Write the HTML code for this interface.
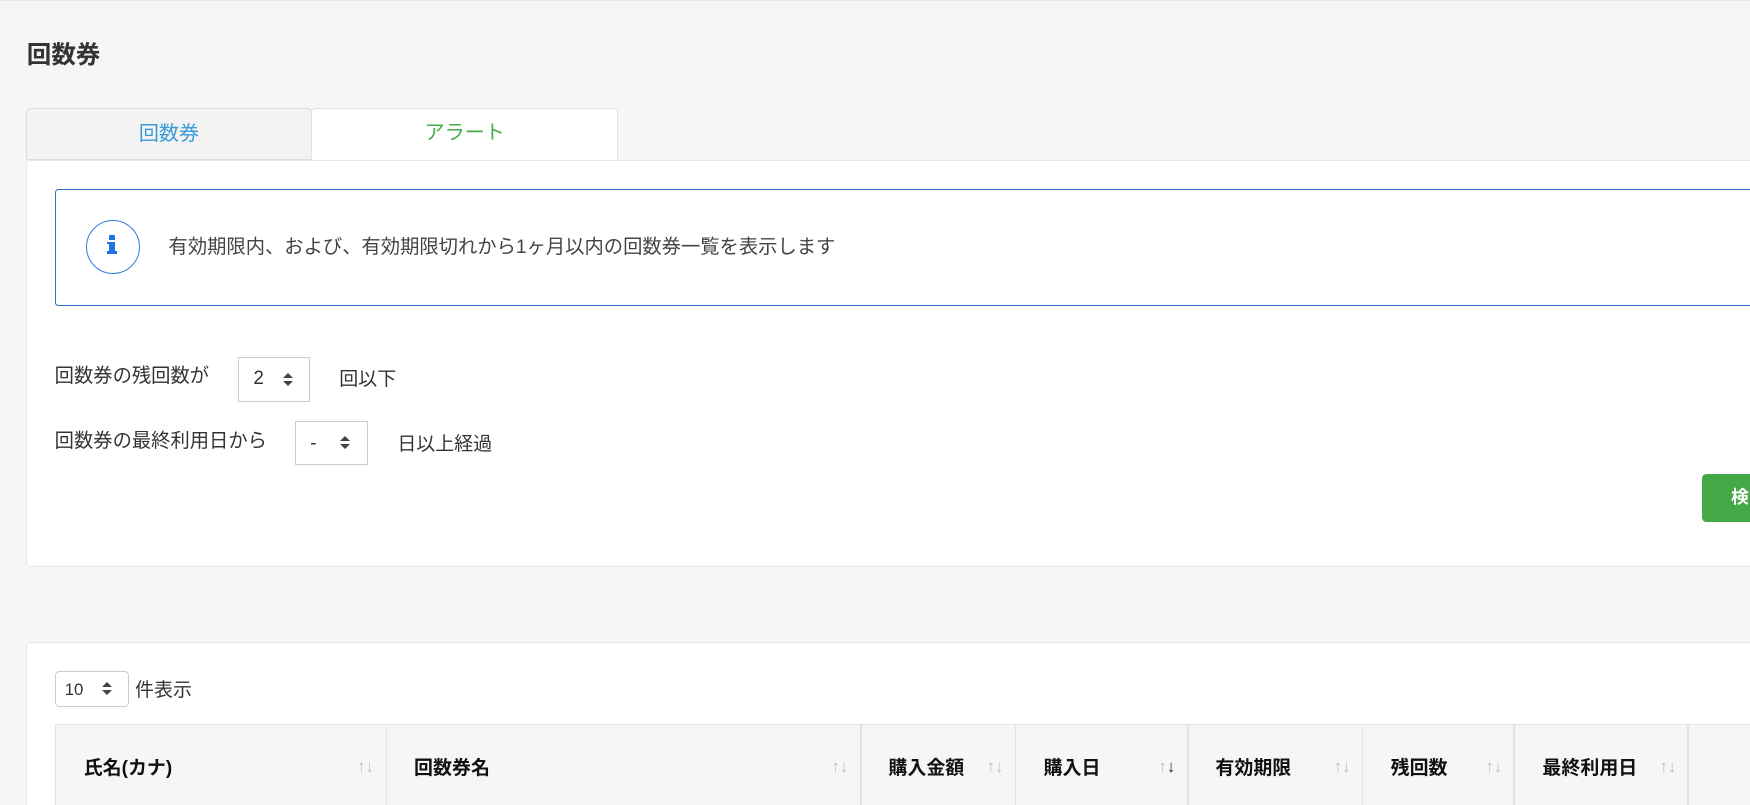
<!DOCTYPE html>
<html><head><meta charset="utf-8"><style>
html,body{margin:0;padding:0;width:1750px;height:805px;overflow:hidden;background:#f6f6f6}
#w{zoom:1.11607;position:relative;width:1568px;height:721px;font-family:"Liberation Sans","Noto Sans CJK JP",sans-serif;color:#333}
.a{position:absolute}
.box{position:absolute;background:#fff;border:1px solid #ccc}
.arr{position:absolute;width:0;height:0;border-left:5px solid transparent;border-right:5px solid transparent}
</style></head><body><div id="w">
<div class="a" style="left:0;top:0;width:1568px;height:1px;background:#e6e6e6"></div>
<div class="a" style="left:24px;top:32px;font-size:22px;font-weight:bold;color:#333">回数券</div>
<div class="a" style="left:23px;top:97px;width:255px;height:45px;background:#f3f3f3;border:1px solid #ddd;border-radius:4px 4px 0 0;text-align:center;line-height:45px;font-size:18px;color:#3a9ad9">回数券</div>
<div class="a" style="left:279px;top:97px;width:273px;height:46px;background:#fff;border:1px solid #e3e3e3;border-bottom:none;border-radius:4px 4px 0 0;text-align:center;line-height:44px;font-size:18px;color:#47aa4a">アラート</div>
<div class="a" style="left:23px;top:143px;width:1560px;height:363px;background:#fff;border:1px solid #e2e6e8;border-radius:4px"></div>
<div class="a" style="left:49px;top:169px;width:1540px;height:103px;border:1px solid #2a6fc9;border-radius:3px"></div>
<div class="a" style="left:77px;top:197px;width:47px;height:47px;border:1px solid #2a7fe0;border-radius:50%"></div>
<div class="a" style="left:98px;top:211px;width:5px;height:4px;background:#1e74e0"></div>
<div class="a" style="left:98px;top:217px;width:5px;height:11px;background:#1e74e0"></div>
<div class="a" style="left:96px;top:225px;width:9px;height:3px;background:#1e74e0"></div>
<div class="a" style="left:96px;top:217px;width:4px;height:2px;background:#1e74e0"></div>
<div class="a" style="left:151px;top:207px;font-size:17.3px;color:#444">有効期限内、および、有効期限切れから1ヶ月以内の回数券一覧を表示します</div>
<div class="a" style="left:49px;top:323px;font-size:17.3px;color:#333">回数券の残回数が</div>
<div class="box" style="left:213px;top:320px;width:63px;height:38px"></div>
<div class="a" style="left:227px;top:330px;font-size:17px">2</div>
<div class="arr" style="left:254px;top:334px;border-bottom:5px solid #444"></div>
<div class="arr" style="left:254px;top:341px;border-top:5px solid #444"></div>
<div class="a" style="left:304px;top:326px;font-size:17px">回以下</div>
<div class="a" style="left:49px;top:381px;font-size:17.3px;color:#333">回数券の最終利用日から</div>
<div class="box" style="left:264px;top:377px;width:64px;height:38px"></div>
<div class="a" style="left:278px;top:388px;font-size:17px">-</div>
<div class="arr" style="left:305px;top:391px;border-bottom:5px solid #444"></div>
<div class="arr" style="left:305px;top:398px;border-top:5px solid #444"></div>
<div class="a" style="left:356px;top:384px;font-size:17px">日以上経過</div>
<div class="a" style="left:1525px;top:425px;width:60px;height:43px;background:#45a846;border-radius:4px;color:#fff;font-weight:bold;font-size:16px;line-height:43px;padding-left:26px">検</div>
<div class="a" style="left:23px;top:575px;width:1560px;height:160px;background:#fff;border:1px solid #e2e6e8;border-radius:4px"></div>
<div class="box" style="left:49px;top:601px;width:65px;height:31px;border-radius:4px"></div>
<div class="a" style="left:58px;top:609px;font-size:15px">10</div>
<div class="arr" style="left:91px;top:611px;border-bottom:5px solid #444"></div>
<div class="arr" style="left:91px;top:618px;border-top:5px solid #444"></div>
<div class="a" style="left:121px;top:605px;font-size:17px">件表示</div>
<div class="a" style="left:49px;top:649px;width:1540px;height:80px;background:#f6f6f6;border-top:1px solid #dfe6e6;border-left:1px solid #dfe6e6"></div>
<div class="a" style="left:346px;top:649px;width:1px;height:80px;background:#dfe6e6"></div>
<div class="a" style="left:771px;top:649px;width:1px;height:80px;background:#dfe6e6"></div>
<div class="a" style="left:909px;top:649px;width:1px;height:80px;background:#dfe6e6"></div>
<div class="a" style="left:1064px;top:649px;width:1px;height:80px;background:#dfe6e6"></div>
<div class="a" style="left:1220px;top:649px;width:1px;height:80px;background:#dfe6e6"></div>
<div class="a" style="left:1356px;top:649px;width:1px;height:80px;background:#dfe6e6"></div>
<div class="a" style="left:1512px;top:649px;width:1px;height:80px;background:#dfe6e6"></div>
<div style="font-weight:bold;font-size:17px;color:#111">
<div class="a" style="left:75px;top:675px">氏名(カナ)</div>
<div class="a" style="left:371px;top:675px">回数券名</div>
<div class="a" style="left:796px;top:675px">購入金額</div>
<div class="a" style="left:935px;top:675px">購入日</div>
<div class="a" style="left:1089px;top:675px">有効期限</div>
<div class="a" style="left:1246px;top:675px">残回数</div>
<div class="a" style="left:1382px;top:675px">最終利用日</div>
</div>
<div style="font-size:15px;color:#bbb">
<div class="a" style="left:320px;top:678px">↑↓</div>
<div class="a" style="left:745px;top:678px">↑↓</div>
<div class="a" style="left:884px;top:678px">↑↓</div>
<div class="a" style="left:1038px;top:678px">↑<span style="color:#222">↓</span></div>
<div class="a" style="left:1195px;top:678px">↑↓</div>
<div class="a" style="left:1331px;top:678px">↑↓</div>
<div class="a" style="left:1487px;top:678px">↑↓</div>
</div>
</div></body></html>
